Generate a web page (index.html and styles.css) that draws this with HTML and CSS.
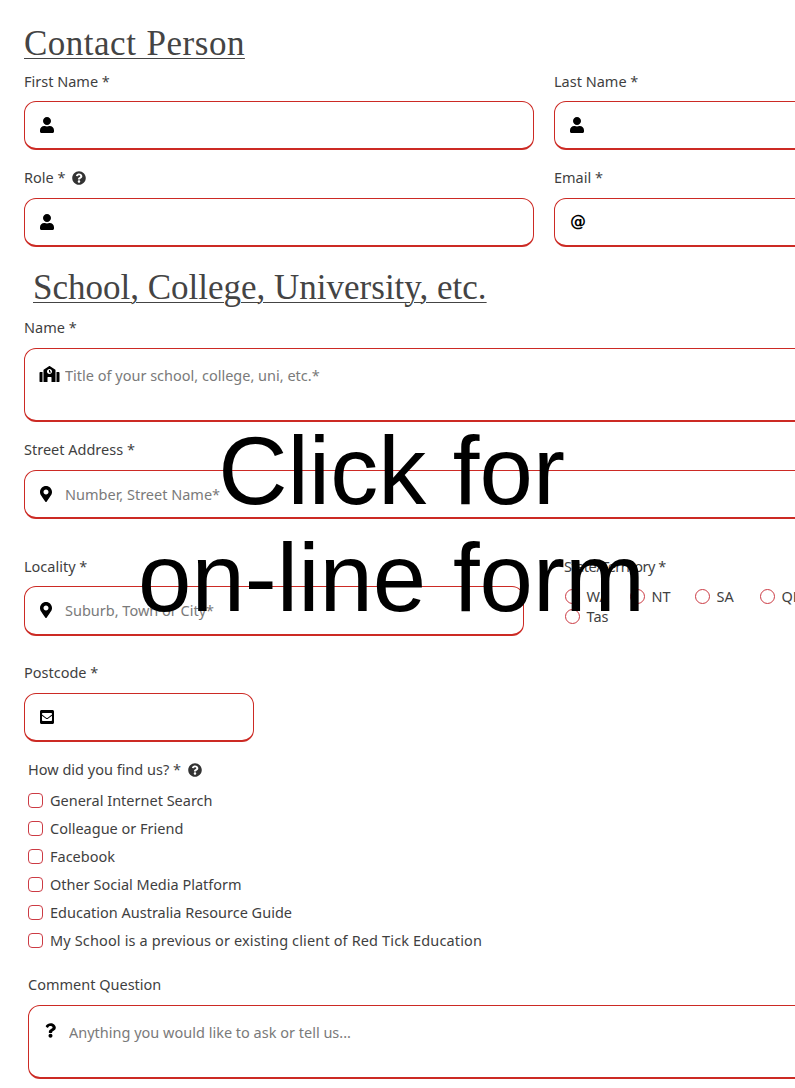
FILE: index.html
```html
<!DOCTYPE html>
<html lang="en">
<head>
  <meta charset="UTF-8" />
  <meta name="viewport" content="width=device-width, initial-scale=1.0"/>
  <title>Contact Form</title>
  <link rel="stylesheet" href="styles.css">
</head>
<body>

  <form class="form">
    <h2 class="heading heading-contact">Contact Person</h2>

    <div class="row row-two row-first">
      <div class="form-group">
        <label>First Name *</label>
        <div class="field">
          <svg class="icon" viewBox="0 0 448 512"><path d="M224 256c70.7 0 128-57.3 128-128S294.7 0 224 0 96 57.3 96 128s57.3 128 128 128zm89.6 32h-16.7c-22.2 10.2-46.9 16-72.9 16s-50.6-5.8-72.9-16h-16.7C60.2 288 0 348.2 0 422.4V464c0 26.5 21.5 48 48 48h352c26.5 0 48-21.5 48-48v-41.6c0-74.2-60.2-134.4-134.4-134.4z"/></svg>
          <input type="text">
        </div>
      </div>
      <div class="form-group">
        <label>Last Name *</label>
        <div class="field">
          <svg class="icon" viewBox="0 0 448 512"><path d="M224 256c70.7 0 128-57.3 128-128S294.7 0 224 0 96 57.3 96 128s57.3 128 128 128zm89.6 32h-16.7c-22.2 10.2-46.9 16-72.9 16s-50.6-5.8-72.9-16h-16.7C60.2 288 0 348.2 0 422.4V464c0 26.5 21.5 48 48 48h352c26.5 0 48-21.5 48-48v-41.6c0-74.2-60.2-134.4-134.4-134.4z"/></svg>
          <input type="text">
        </div>
      </div>
    </div>

    <div class="row row-two">
      <div class="form-group">
        <label>Role * <svg class="help" viewBox="0 0 512 512"><path d="M504 256c0 136.997-111.043 248-248 248S8 392.997 8 256C8 119.083 119.043 8 256 8s248 111.083 248 248zM262.655 90c-54.497 0-89.255 22.957-116.549 63.758-3.536 5.286-2.353 12.415 2.715 16.258l34.699 26.31c5.205 3.947 12.621 3.008 16.665-2.122 17.864-22.658 30.113-35.797 57.303-35.797 20.429 0 45.698 13.148 45.698 32.958 0 14.976-12.363 22.667-32.534 33.976C247.128 238.528 216 254.941 216 296v4c0 6.627 5.373 12 12 12h56c6.627 0 12-5.373 12-12v-1.333c0-28.462 83.186-29.647 83.186-106.667 0-58.002-60.165-102-116.531-102zM256 338c-25.365 0-46 20.635-46 46 0 25.364 20.635 46 46 46s46-20.636 46-46c0-25.365-20.635-46-46-46z"/></svg></label>
        <div class="field">
          <svg class="icon" viewBox="0 0 448 512"><path d="M224 256c70.7 0 128-57.3 128-128S294.7 0 224 0 96 57.3 96 128s57.3 128 128 128zm89.6 32h-16.7c-22.2 10.2-46.9 16-72.9 16s-50.6-5.8-72.9-16h-16.7C60.2 288 0 348.2 0 422.4V464c0 26.5 21.5 48 48 48h352c26.5 0 48-21.5 48-48v-41.6c0-74.2-60.2-134.4-134.4-134.4z"/></svg>
          <input type="text">
        </div>
      </div>
      <div class="form-group">
        <label>Email *</label>
        <div class="field">
          <span class="at">@</span>
          <input type="text">
        </div>
      </div>
    </div>

    <h2 class="heading heading-school">School, College, University, etc.</h2>

    <div class="form-group">
      <label>Name *</label>
      <div class="field field-tall">
        <svg class="icon icon-school" viewBox="0 0 640 512"><path d="M0 224v272c0 8.84 7.16 16 16 16h80V192H32c-17.67 0-32 14.33-32 32zm360-48h-24v-40c0-4.42-3.58-8-8-8h-16c-4.42 0-8 3.58-8 8v64c0 4.42 3.58 8 8 8h48c4.42 0 8-3.58 8-8v-16c0-4.42-3.58-8-8-8zm137.75-63.96l-160-106.67a32.02 32.02 0 0 0-35.5 0l-160 106.67A32.002 32.002 0 0 0 128 138.66V512h128V368c0-8.84 7.16-16 16-16h96c8.84 0 16 7.16 16 16v144h128V138.67c0-10.7-5.35-20.69-14.25-26.63zM320 256c-44.18 0-80-35.82-80-80s35.82-80 80-80 80 35.82 80 80-35.82 80-80 80zm288-64h-64v320h80c8.84 0 16-7.16 16-16V224c0-17.67-14.33-32-32-32z"/></svg>
        <textarea placeholder="Title of your school, college, uni, etc.*"></textarea>
      </div>
    </div>

    <div class="form-group group-street">
      <label>Street Address *</label>
      <div class="field">
        <svg class="icon icon-pin" viewBox="0 0 384 512"><path d="M172.268 501.67C26.97 291.031 0 269.413 0 192 0 85.961 85.961 0 192 0s192 85.961 192 192c0 77.413-26.97 99.031-172.268 309.67-9.535 13.774-29.93 13.773-39.464 0zM192 272c44.183 0 80-35.817 80-80s-35.817-80-80-80-80 35.817-80 80 35.817 80 80 80z"/></svg>
        <input type="text" placeholder="Number, Street Name*">
      </div>
    </div>

    <div class="row row-locality">
      <div class="form-group">
        <label>Locality *</label>
        <div class="field">
          <svg class="icon icon-pin" viewBox="0 0 384 512"><path d="M172.268 501.67C26.97 291.031 0 269.413 0 192 0 85.961 85.961 0 192 0s192 85.961 192 192c0 77.413-26.97 99.031-172.268 309.67-9.535 13.774-29.93 13.773-39.464 0zM192 272c44.183 0 80-35.817 80-80s-35.817-80-80-80-80 35.817-80 80 35.817 80 80 80z"/></svg>
          <input type="text" placeholder="Suburb, Town or City*">
        </div>
      </div>
      <div class="form-group">
        <label class="state-label">State/Territory *</label>
        <div class="radios">
          <label class="radio"><span class="radio-mark"></span>WA</label>
          <label class="radio"><span class="radio-mark"></span>NT</label>
          <label class="radio"><span class="radio-mark"></span>SA</label>
          <label class="radio"><span class="radio-mark"></span>QLD</label>
          <label class="radio radio-break"><span class="radio-mark"></span>Tas</label>
        </div>
      </div>
    </div>

    <div class="form-group group-postcode">
      <label>Postcode *</label>
      <div class="field field-short">
        <svg class="icon" viewBox="0 0 448 512"><path d="M400 32H48C21.49 32 0 53.49 0 80v352c0 26.51 21.49 48 48 48h352c26.51 0 48-21.49 48-48V80c0-26.51-21.49-48-48-48zM178.117 262.104C87.429 196.287 88.353 196.121 64 177.167V152c0-13.255 10.745-24 24-24h272c13.255 0 24 10.745 24 24v25.167c-24.371 18.969-23.434 19.124-114.117 84.938-10.5 7.655-31.392 26.12-45.883 25.894-14.503.218-35.367-18.227-45.883-25.895zM384 217.775V360c0 13.255-10.745 24-24 24H88c-13.255 0-24-10.745-24-24V217.775c13.958 10.794 33.329 25.236 95.303 70.214 14.162 10.341 37.975 32.145 64.694 32.01 26.887.134 51.037-22.041 64.72-32.025 61.958-44.965 81.325-59.406 95.283-70.199z"/></svg>
        <input type="text">
      </div>
    </div>

    <div class="inset">
      <div class="find-title">How did you find us? * <svg class="help" viewBox="0 0 512 512"><path d="M504 256c0 136.997-111.043 248-248 248S8 392.997 8 256C8 119.083 119.043 8 256 8s248 111.083 248 248zM262.655 90c-54.497 0-89.255 22.957-116.549 63.758-3.536 5.286-2.353 12.415 2.715 16.258l34.699 26.31c5.205 3.947 12.621 3.008 16.665-2.122 17.864-22.658 30.113-35.797 57.303-35.797 20.429 0 45.698 13.148 45.698 32.958 0 14.976-12.363 22.667-32.534 33.976C247.128 238.528 216 254.941 216 296v4c0 6.627 5.373 12 12 12h56c6.627 0 12-5.373 12-12v-1.333c0-28.462 83.186-29.647 83.186-106.667 0-58.002-60.165-102-116.531-102zM256 338c-25.365 0-46 20.635-46 46 0 25.364 20.635 46 46 46s46-20.636 46-46c0-25.365-20.635-46-46-46z"/></svg></div>
      <div class="checks">
        <label class="check"><span class="check-mark"></span>General Internet Search</label>
        <label class="check"><span class="check-mark"></span>Colleague or Friend</label>
        <label class="check"><span class="check-mark"></span>Facebook</label>
        <label class="check"><span class="check-mark"></span>Other Social Media Platform</label>
        <label class="check"><span class="check-mark"></span>Education Australia Resource Guide</label>
        <label class="check check-long"><span class="check-mark"></span>My School is a previous or existing client of Red Tick Education</label>
      </div>

      <div class="form-group group-comment">
        <label>Comment Question</label>
        <div class="field field-tall">
          <svg class="icon icon-question" viewBox="0 0 384 512"><path d="M202.021 0C122.202 0 70.503 32.703 29.914 91.026c-7.363 10.58-5.093 25.086 5.178 32.874l43.138 32.709c10.373 7.865 25.132 6.026 33.253-4.148 25.049-31.381 43.63-49.449 82.757-49.449 30.764 0 68.816 19.799 68.816 49.631 0 22.552-18.617 34.134-48.993 51.164-35.423 19.86-82.299 44.576-82.299 106.405V320c0 13.255 10.745 24 24 24h72.471c13.255 0 24-10.745 24-24v-5.773c0-42.86 125.268-44.645 125.268-160.627C377.504 66.256 286.902 0 202.021 0zM192 373.459c-38.196 0-69.271 31.075-69.271 69.271 0 38.195 31.075 69.27 69.271 69.27s69.271-31.075 69.271-69.271-31.075-69.27-69.271-69.27z"/></svg>
          <textarea placeholder="Anything you would like to ask or tell us..."></textarea>
        </div>
      </div>
    </div>
  </form>

  <div class="overlay">Click for<br>on-line form</div>

</body>
</html>
```

FILE: styles.css
```css
* { box-sizing: border-box; }

html, body {
  height: 100%;
  overflow: hidden;
}

body {
  margin: 0;
  position: relative;
  font-family: 'Noto Sans', sans-serif;
  font-size: 14.5px;
  line-height: 20px;
  color: #3f3f3f;
  background-color: #ffffff;
}

.form {
  width: 1100px;
  padding: 25px 0 0 24px;
}

.heading {
  margin: 0;
  display: inline-block;
  font-family: 'Liberation Serif', serif;
  font-weight: normal;
  font-size: 35px;
  line-height: 38px;
  color: #444444;
  text-decoration: underline;
  text-decoration-thickness: 1px;
  text-underline-offset: 3px;
}

.heading-contact {
  letter-spacing: 0.5px;
  word-spacing: 1px;
}

.heading-school {
  display: block;
  margin: 22px 0 10.2px 9px;
}

.row {
  display: grid;
  gap: 20px;
}

.row-two {
  grid-template-columns: 510px 510px;
  margin-bottom: 16.4px;
}

.row-first {
  margin-top: 7.6px;
}

.form-group label {
  display: block;
  margin-bottom: 10.7px;
}

.field {
  display: flex;
  align-items: center;
  gap: 9px;
  height: 49.2px;
  padding: 0 15px;
  border: 1px solid #cc2a24;
  border-bottom-width: 2px;
  border-radius: 12px;
}

.field input,
.field textarea {
  flex-grow: 1;
  border: none;
  outline: none;
  padding: 0;
  background: transparent;
  font: inherit;
  color: inherit;
  resize: none;
}

.field input::placeholder,
.field textarea::placeholder {
  color: #7a7a7a;
  opacity: 1;
}

.field-tall {
  align-items: flex-start;
  height: 74.5px;
  padding-top: 16px;
}

.field-tall textarea {
  height: 40px;
}

.field-short {
  width: 230px;
}

.icon {
  width: 14px;
  height: 16px;
  flex-shrink: 0;
  fill: #000000;
}

.icon-school {
  width: 21px;
  margin: 1px -4px 0 -1px;
}

.icon-pin {
  margin-right: 4px;
  width: 12px;
}

.icon-question {
  margin: 1px 4px 0 1px;
  width: 11px;
  height: 15px;
}

.at {
  width: 17px;
  flex-shrink: 0;
  font-family: 'DejaVu Sans', sans-serif;
  font-weight: bold;
  font-size: 16px;
  color: #000000;
}

.help {
  width: 14px;
  height: 14px;
  margin-left: 3px;
  vertical-align: -2px;
  fill: #333333;
}

.group-street {
  margin-top: 17.1px;
}

.row-locality {
  grid-template-columns: 500px 400px;
  gap: 40px;
  margin-top: 36.6px;
}

.form-group .state-label {
  letter-spacing: -0.5px;
}

.radios {
  display: flex;
  flex-wrap: wrap;
  column-gap: 19px;
  margin: 1px 0 0 1px;
}

.form-group .radio {
  display: flex;
  align-items: center;
  gap: 6.5px;
  margin: 0;
  width: 46px;
  white-space: nowrap;
}

.form-group .radio-break {
  flex-basis: 100%;
}

.radio-mark {
  width: 15px;
  height: 15px;
  border: 1.5px solid #cc3b44;
  border-radius: 50%;
  flex-shrink: 0;
}

.group-postcode {
  margin-top: 26.5px;
}

.inset {
  margin: 16.9px 0 0 4px;
}

.checks {
  display: flex;
  flex-direction: column;
  gap: 8px;
  margin-top: 11px;
}

.check {
  display: flex;
  align-items: center;
  gap: 7px;
}

.check-long {
  letter-spacing: 0.14px;
}

.check-mark {
  width: 15px;
  height: 15px;
  margin-top: 1px;
  border: 1.5px solid #cc3b44;
  border-radius: 4px;
  flex-shrink: 0;
}

.group-comment {
  margin-top: 24px;
}

.overlay {
  position: absolute;
  top: 417px;
  left: 0;
  width: 783px;
  text-align: center;
  font-family: 'Liberation Sans', sans-serif;
  font-size: 96px;
  line-height: 107px;
  color: #000000;
}
```
